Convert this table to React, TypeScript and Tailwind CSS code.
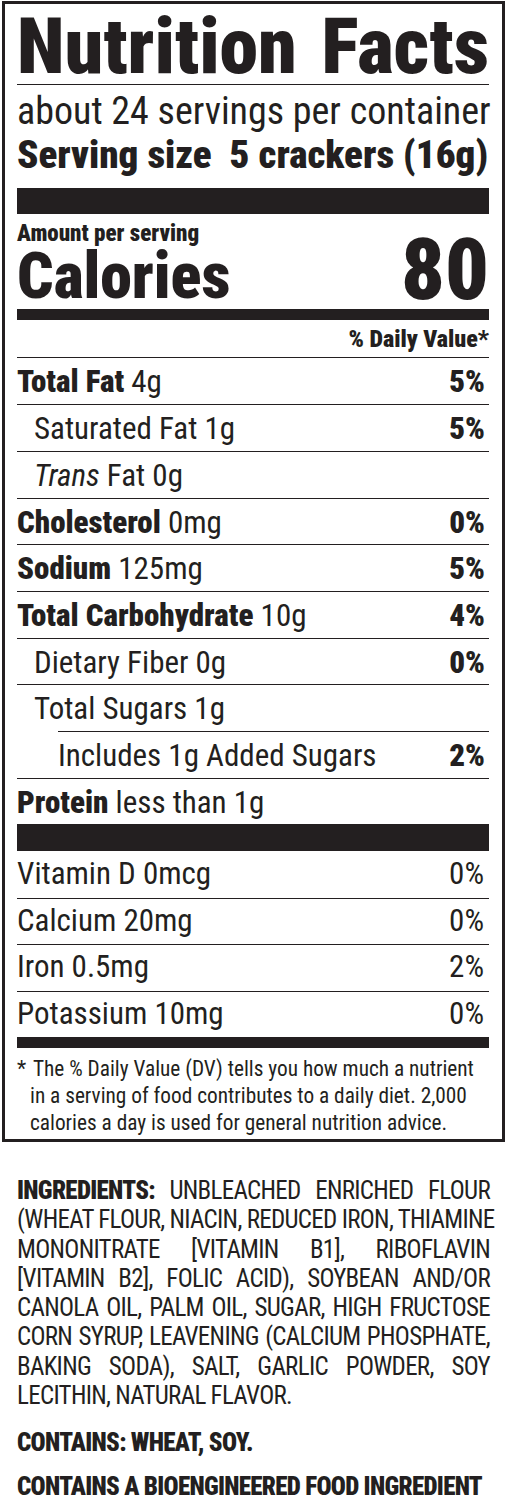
const ink = 'text-[#231f20]'

type Nutrient = {
  label: string
  bold?: boolean
  italic?: string
  amount?: string
  dv?: string
  level: 0 | 1 | 2
  h: string
}

const nutrients: Nutrient[] = [
  { label: 'Total Fat', bold: true, amount: '4g', dv: '5%', level: 0, h: 'h-[47px]' },
  { label: 'Saturated Fat 1g', dv: '5%', level: 1, h: 'h-[47px]' },
  { label: 'Fat 0g', italic: 'Trans', level: 1, h: 'h-[47px]' },
  { label: 'Cholesterol', bold: true, amount: '0mg', dv: '0%', level: 0, h: 'h-[46px]' },
  { label: 'Sodium', bold: true, amount: '125mg', dv: '5%', level: 0, h: 'h-[47px]' },
  { label: 'Total Carbohydrate', bold: true, amount: '10g', dv: '4%', level: 0, h: 'h-[47px]' },
  { label: 'Dietary Fiber 0g', dv: '0%', level: 1, h: 'h-[46px]' },
  { label: 'Total Sugars 1g', level: 1, h: 'h-[47px]' },
  { label: 'Includes 1g Added Sugars', dv: '2%', level: 2, h: 'h-[47px]' },
  { label: 'Protein', bold: true, amount: 'less than 1g', level: 0, h: 'h-[46px]' },
]

const vitamins = [
  { label: 'Vitamin D 0mcg', dv: '0%', cls: 'h-[47px] pt-[1px]' },
  { label: 'Calcium 20mg', dv: '0%', cls: 'h-[46px] border-t border-[#231f20]' },
  { label: 'Iron 0.5mg', dv: '2%', cls: 'h-[47px] border-t border-[#231f20]' },
  { label: 'Potassium 10mg', dv: '0%', cls: 'h-[46px] border-t border-[#231f20]' },
]

const ingredientLines = [
  'UNBLEACHED ENRICHED FLOUR',
  '(WHEAT FLOUR, NIACIN, REDUCED IRON, THIAMINE',
  'MONONITRATE [VITAMIN B1], RIBOFLAVIN',
  '[VITAMIN B2], FOLIC ACID), SOYBEAN AND/OR',
  'CANOLA OIL, PALM OIL, SUGAR, HIGH FRUCTOSE',
  'CORN SYRUP, LEAVENING (CALCIUM PHOSPHATE,',
  'BAKING SODA), SALT, GARLIC POWDER, SOY',
]

const NutrientRow = ({ n }: { n: Nutrient }) => {
  const indent =
    n.level === 2 ? 'ml-[41px]' : n.level === 1 ? 'pl-[17px]' : ''
  return (
    <div
      className={`flex justify-between border-t border-[#231f20] pt-[2px] pr-[4px] text-[31px] leading-[44px] whitespace-nowrap ${n.h} ${indent}`}
    >
      <span>
        {n.bold && <span className="font-black">{n.label} </span>}
        {n.italic && <span className="italic">{n.italic} </span>}
        {n.bold ? n.amount : n.label}
      </span>
      {n.dv && <span className="font-black">{n.dv}</span>}
    </div>
  )
}

const App = () => {
  return (
    <div
      className={`w-[507px] bg-white ${ink} font-['Roboto_Condensed','Roboto',sans-serif]`}
    >
      <div className="ml-[2px] mt-[1px] w-[503px] border-[3px] border-[#231f20] pl-[12px] pr-[13px] pb-[3px]">
        <div className="pt-[11px] text-[78px] font-black leading-[64px] whitespace-nowrap [text-align-last:justify]">
          Nutrition Facts
        </div>
        <div className="mt-[5px] border-t border-[#231f20]" />
        <div className="mt-[6px] text-[38px] leading-[40px] whitespace-nowrap [text-align-last:justify]">
          about 24 servings per container
        </div>
        <div className="mt-[4px] text-[39px] font-black leading-[40px] whitespace-nowrap">
          Serving size&nbsp; 5 crackers (16g)
        </div>
        <div className="mt-[13px] h-[26px] bg-[#231f20]" />

        <div className="flex items-end justify-between">
          <div>
            <div className="mt-[8px] text-[23px] font-black leading-[24px]">
              Amount per serving
            </div>
            <div className="mt-[3px] text-[64px] font-black leading-[56px]">
              Calories
            </div>
          </div>
          <div className="text-[86px] font-black leading-[71px]">80</div>
        </div>
        <div className="mt-[4px] h-[11px] bg-[#231f20]" />
        <div className="mt-[7px] mb-[6px] text-right text-[24px] font-black leading-[24px]">
          % Daily Value*
        </div>

        {nutrients.map((n) => (
          <NutrientRow key={n.label} n={n} />
        ))}
        <div className="h-[27px] bg-[#231f20]" />

        {vitamins.map((v) => (
          <div
            key={v.label}
            className={`flex justify-between pr-[5px] text-[31px] leading-[44px] whitespace-nowrap ${v.cls}`}
          >
            <span>{v.label}</span>
            <span>{v.dv}</span>
          </div>
        ))}
        <div className="h-[11px] bg-[#231f20]" />

        <p className="mt-[7px] pl-[13px] -indent-[13px] text-[21.3px] leading-[27px] whitespace-nowrap">
          <span className="inline-block w-[16px] indent-0">*</span>
          The % Daily Value (DV) tells you how much a nutrient
          <br />
          in a serving of food contributes to a daily diet. 2,000
          <br />
          calories a day is used for general nutrition advice.
        </p>
      </div>

      <div className="mt-[34px] px-[17px] text-[25px] leading-[29.3px] tracking-[-0.7px]">
        {ingredientLines.map((line, i) => (
          <div
            key={i}
            className="whitespace-nowrap [text-align-last:justify]"
          >
            {i === 0 && <span className="font-black">INGREDIENTS: </span>}
            {line}
          </div>
        ))}
        <div className="whitespace-nowrap">LECITHIN, NATURAL FLAVOR.</div>
        <div className="mt-[18px] font-black">CONTAINS: WHEAT, SOY.</div>
        <div className="mt-[14px] font-black whitespace-nowrap">
          CONTAINS A BIOENGINEERED FOOD INGREDIENT
        </div>
      </div>
    </div>
  )
}

export default App
